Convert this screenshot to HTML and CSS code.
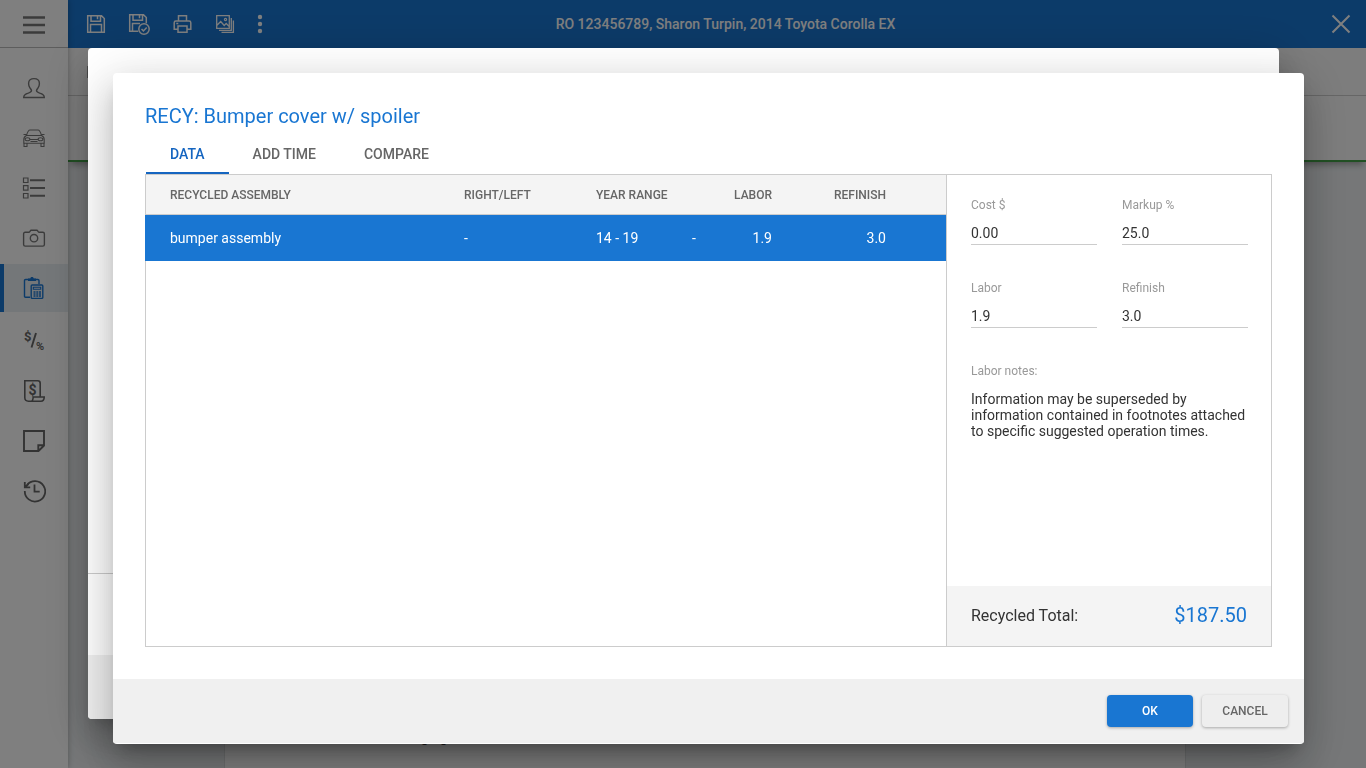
FILE: index.html
```html
<!DOCTYPE html>
<html lang="en">
<head>
    <meta charset="UTF-8">
    <meta name="viewport" content="width=device-width, initial-scale=1.0">
    <title>RO 123456789</title>
    <link rel="stylesheet" href="styles.css">
</head>
<body>
    <div class="app">
        <nav class="sidebar">
            <button class="menu-btn" aria-label="Menu">
                <svg class="icon" viewBox="0 0 24 24"><path d="M1 5.500h22M1 13h22M1 20.500h22" stroke-width="2.700"/></svg>
            </button>
            <div class="nav-group">
                <a class="nav-item" href="#" aria-label="Customer">
                    <svg class="icon" viewBox="0 0 24 24"><path d="M1.700 21.500c0-2.800 1.600-3.600 4.600-4.400 2-.6 3.200-1.300 3.200-2.500 0-1-1-1.800-1.700-3C6.900 10 6.600 8.600 6.600 7.400 6.600 4.300 8.800 2.600 12 2.600s5.400 1.700 5.400 4.800c0 1.200-.3 2.600-1.200 4.200-.7 1.200-1.700 2-1.700 3 0 1.200 1.200 1.900 3.200 2.500 3 .8 4.600 1.600 4.600 4.400z"/></svg>
                </a>
                <a class="nav-item" href="#" aria-label="Vehicle">
                    <svg class="icon thin" viewBox="0 0 24 24"><path d="M4.500 9.500C5.500 6 6.300 4 8 4h8c1.700 0 2.500 2 3.500 5.500M1.500 8.500h2.700M19.800 8.500h2.700M4.500 9.500h15c1.700.8 2.700 2 2.700 4v3.700H1.800v-3.700c0-2 1-3.200 2.700-4zM2 17.500v3h3v-3M19 17.500v3h3v-3M8 13.500h8M8.500 15.500h7"/><ellipse cx="5.500" cy="13.200" rx="2.400" ry="1.500"/><ellipse cx="18.500" cy="13.200" rx="2.400" ry="1.500"/></svg>
                </a>
                <a class="nav-item" href="#" aria-label="List">
                    <svg class="icon" viewBox="0 0 24 24"><path d="M1.500 2h4.500v4.500H1.500zM1.500 9.700h4.500v4.500H1.500zM1.500 17.500h4.500v4.500H1.500z" stroke-width="1.200"/><path d="M8 4.200h15M8 12h15M8 19.700h15" stroke-width="1.900"/></svg>
                </a>
                <a class="nav-item" href="#" aria-label="Photos">
                    <svg class="icon" viewBox="0 0 24 24"><path d="M3.200 6.300h3.600c1.200 0 1.200-2 2.400-2h5.600c1.200 0 1.200 2 2.400 2h3.600c1 0 1.600.6 1.600 1.600v10.600c0 1-.6 1.600-1.600 1.600H3.200c-1 0-1.600-.6-1.600-1.600V7.900c0-1 .6-1.600 1.600-1.600z"/><circle cx="12" cy="12.200" r="3.700"/></svg>
                </a>
                <a class="nav-item active" href="#" aria-label="Estimate">
                    <svg class="icon" viewBox="0 0 24 24"><path d="M8 21.300H3.600c-.7 0-1.100-.4-1.100-1.100V4.600c0-.7.400-1.100 1.100-1.100h12.300c.7 0 1.100.4 1.100 1.100V8"/><path class="fill" d="M6 5V2.500h2.300C8.600 1.300 9 .9 10 .9s1.400.4 1.700 1.600H14V5z"/><rect x="9.200" y="9" width="11.600" height="13.400" rx="1"/><path d="M11.300 11.300h7.400v2h-7.400z" stroke-width="1.100"/><path d="M11.500 16h2M14.300 16h2M17 16h2M11.500 18h2M14.300 18h2M17 18h2M11.500 20h2M14.300 20h2M17 20h2"/></svg>
                </a>
            </div>
            <div class="nav-group dark">
                <a class="nav-item" href="#" aria-label="Rates">
                    <svg class="icon" viewBox="0 0 24 24"><path d="M14 4 9.500 18.500" stroke-width="1.900"/><text x="2" y="12" font-size="13">$</text><text x="14" y="21" font-size="11">%</text></svg>
                </a>
                <a class="nav-item" href="#" aria-label="Invoice">
                    <svg class="icon" viewBox="0 0 24 24"><path d="M6.500 22.200c-2.500 0-3.700-1.200-3.700-3.700V1.800h13c1.500 0 2.400 1 2.400 2.500v13.200M6.500 22.200h2.700c1.500 0 1.800-1.500 2-4.200h11c0 3-1 4.200-3.300 4.200H8.500" stroke-width="1.600"/><text x="6.500" y="15.500" font-size="14">$</text></svg>
                </a>
                <a class="nav-item" href="#" aria-label="Notes">
                    <svg class="icon" viewBox="0 0 24 24"><path d="M2 2h20v14.500L16.500 22H2zM16.300 22v-5.700H22" stroke-width="1.900"/></svg>
                </a>
                <a class="nav-item" href="#" aria-label="History">
                    <svg class="icon" viewBox="0 0 24 24"><path d="M2.800 12A10.200 10.200 0 1 0 5 6" stroke-width="1.800"/><path d="M2.800 3v5.300h5.400M3 8.200 6.500 5M12.500 5.500v7.200h5.200" stroke-width="1.800"/></svg>
                </a>
            </div>
        </nav>
        <div class="main">
            <header class="topbar">
                <div class="actions">
                    <button aria-label="Save">
                        <svg class="icon" viewBox="0 0 24 24"><path d="M3.700 3.700h13.800l2.800 2.800v13.800H3.700zM7 3.700v5.600h9.500V3.700M13.500 4.500v2.800M6.500 20.300v-7.800h11v7.800"/></svg>
                    </button>
                    <button aria-label="Save and check">
                        <svg class="icon" viewBox="0 0 24 24"><path d="M11.300 19.300H2.700V2.700h13.800l2.800 2.800v5.800M6 2.700v5.600h9.500V2.700M12.500 3.500v2.800M5.500 19.300v-7.800H13"/><circle cx="17" cy="17" r="5.200"/><path d="m14.500 17 1.900 1.900 3.300-3.500"/></svg>
                    </button>
                    <button aria-label="Print">
                        <svg class="icon" viewBox="0 0 24 24"><path d="M8.500 9V3.700h8V9M8 17.300H4.200v-6.600c0-1 .7-1.700 1.700-1.700h13.200c1 0 1.700.7 1.700 1.700v6.600H17M8 14h9v6.300H8zM6.300 11.500h2"/></svg>
                    </button>
                    <button aria-label="Images">
                        <svg class="icon" viewBox="0 0 24 24"><path d="M3.700 3.700h12.600v12.600H3.700zM6 18.300h12.300V6M8.500 20.400h11.900V8.500M3.700 13.500l4-4 3.500 4 2-2 3 3" stroke-width="1.300"/><circle cx="12.500" cy="7.500" r="1.100" stroke-width="1.200"/></svg>
                    </button>
                    <button class="more" aria-label="More">
                        <svg viewBox="0 0 8 24"><circle cx="4" cy="5" r="2.200"/><circle cx="4" cy="12" r="2.200"/><circle cx="4" cy="19" r="2.200"/></svg>
                    </button>
                </div>
                <div class="ro-title">RO 123456789, Sharon Turpin, 2014 Toyota Corolla EX</div>
                <button class="close-btn" aria-label="Close">
                    <svg class="icon" viewBox="0 0 24 24"><path d="m3.500 3.500 17 17m0-17-17 17" stroke-width="2"/></svg>
                </button>
            </header>
            <div class="subbar"><span class="marker"></span></div>
            <div class="summary"></div>
            <div class="content">
                <div class="paper">Imaging</div>
            </div>
        </div>
    </div>

    <div class="overlay"></div>

    <div class="modal modal-back">
        <div class="modal-body"></div>
        <div class="modal-total"></div>
        <div class="modal-footer"></div>
    </div>

    <div class="modal modal-front" role="dialog" aria-labelledby="modal-title">
        <div class="modal-body">
            <h1 class="modal-title" id="modal-title">RECY: Bumper cover w/ spoiler</h1>
            <div class="tabs" role="tablist">
                <button class="tab active" role="tab" aria-selected="true">DATA</button>
                <button class="tab" role="tab">ADD TIME</button>
                <button class="tab" role="tab">COMPARE</button>
            </div>
            <div class="panel">
                <div class="table-wrap">
                    <table class="parts">
                        <thead>
                            <tr>
                                <th class="col-name">RECYCLED ASSEMBLY</th>
                                <th class="col-side">RIGHT/LEFT</th>
                                <th class="col-year">YEAR RANGE</th>
                                <th class="col-note"></th>
                                <th class="col-labor">LABOR</th>
                                <th class="col-refinish">REFINISH</th>
                            </tr>
                        </thead>
                        <tbody>
                            <tr class="selected">
                                <td class="col-name">bumper assembly</td>
                                <td>-</td>
                                <td>14 - 19</td>
                                <td>-</td>
                                <td class="col-labor">1.9</td>
                                <td class="col-refinish">3.0</td>
                            </tr>
                        </tbody>
                    </table>
                </div>
                <div class="details">
                    <div class="fields">
                        <div class="field">
                            <label for="cost">Cost $</label>
                            <input type="text" id="cost" value="0.00">
                        </div>
                        <div class="field">
                            <label for="markup">Markup %</label>
                            <input type="text" id="markup" value="25.0">
                        </div>
                        <div class="field">
                            <label for="labor">Labor</label>
                            <input type="text" id="labor" value="1.9">
                        </div>
                        <div class="field">
                            <label for="refinish">Refinish</label>
                            <input type="text" id="refinish" value="3.0">
                        </div>
                        <div class="notes">
                            <h2>Labor notes:</h2>
                            <p>Information may be superseded by information contained in footnotes attached to specific suggested operation times.</p>
                        </div>
                    </div>
                    <div class="total">
                        <span>Recycled Total:</span>
                        <span class="amount">$187.50</span>
                    </div>
                </div>
            </div>
        </div>
        <div class="modal-footer">
            <button class="btn btn-primary">OK</button>
            <button class="btn">CANCEL</button>
        </div>
    </div>
</body>
</html>
```
FILE: styles.css
```css
* {
    box-sizing: border-box;
}
body {
    margin: 0;
    height: 100vh;
    overflow: hidden;
    font-family: Roboto, sans-serif;
    font-size: 14px;
    color: #333;
}
button {
    border: none;
    padding: 0;
    background: none;
    font-family: inherit;
    cursor: pointer;
}

/* App behind the dialogs */
.app {
    display: flex;
    height: 100%;
}
.icon {
    display: block;
    width: 24px;
    height: 24px;
    fill: none;
    stroke: currentColor;
    stroke-width: 1.4;
}
.icon.thin {
    stroke-width: 1.1;
}
.icon text,
.icon .fill {
    fill: currentColor;
    stroke: none;
}
.icon text {
    font-weight: 700;
}
.sidebar {
    width: 68px;
    background: #fff;
    color: #777;
    box-shadow: 0 0 6px rgba(0, 0, 0, 0.3);
    z-index: 2;
}
.menu-btn {
    display: flex;
    justify-content: center;
    align-items: center;
    width: 100%;
    height: 48px;
    border-bottom: 1px solid #bbb;
    margin-bottom: 16px;
    color: #777;
}
.nav-group {
    display: flex;
    flex-direction: column;
    gap: 2px;
    margin-bottom: 5px;
}
.nav-group.dark {
    color: #666;
}
.nav-item {
    display: flex;
    justify-content: center;
    align-items: center;
    height: 48px;
    color: inherit;
}
.nav-item.active {
    background: #e8eef3;
    color: #1976d2;
    box-shadow: inset 4px 0 #1976d2;
}
.main {
    flex: 1;
    display: flex;
    flex-direction: column;
}
.topbar {
    display: grid;
    grid-template-columns: 1fr auto 1fr;
    align-items: center;
    height: 48px;
    padding: 0 13px 0 16px;
    background: #1976d2;
    color: #fff;
}
.topbar .icon {
    stroke-width: 1.5;
}
.topbar button {
    color: inherit;
}
.actions {
    display: flex;
    gap: 19px;
}
.more svg {
    display: block;
    width: 8px;
    height: 24px;
    fill: currentColor;
}
.ro-title {
    padding-left: 14px;
    font-weight: 500;
}
.close-btn {
    justify-self: end;
}
.subbar {
    display: flex;
    align-items: center;
    height: 48px;
    padding-left: 19px;
    background: #fafafa;
    border-bottom: 1px solid #ccc;
}
.marker {
    width: 8px;
    height: 12px;
    background: #999;
}
.summary {
    height: 66px;
    background: #fafafa;
    border-bottom: 2px solid #43a047;
    box-shadow: 0 6px 6px -3px rgba(0, 0, 0, 0.3);
    z-index: 1;
}
.content {
    flex: 1;
    display: flex;
    padding: 0 181px 0 157px;
    background: #eceff1;
}
.paper {
    flex: 1;
    display: flex;
    align-items: flex-end;
    padding: 0 172px 23px;
    background: #fff;
    box-shadow: 0 0 1px rgba(0, 0, 0, 0.4);
}
.overlay {
    position: fixed;
    inset: 0;
    z-index: 5;
    background: rgba(0, 0, 0, 0.5);
}

/* Dialogs */
.modal {
    position: fixed;
    z-index: 10;
    display: flex;
    flex-direction: column;
    background: #fff;
    border-radius: 4px;
    overflow: hidden;
    box-shadow:
        0 11px 15px -7px rgba(0, 0, 0, 0.2),
        0 24px 38px 3px rgba(0, 0, 0, 0.14),
        0 9px 46px 8px rgba(0, 0, 0, 0.12);
}
.modal-back {
    inset: 48px 87px 49px 88px;
}
.modal-front {
    inset: 73px 62px 24px 113px;
    padding-bottom: 1px;
}
.modal-body {
    flex: 1;
    display: flex;
    flex-direction: column;
    padding: 32px;
}
.modal-total {
    height: 82px;
    border-top: 1px solid #ccc;
}
.modal-footer {
    display: flex;
    justify-content: flex-end;
    gap: 9px;
    height: 64px;
    padding: 16px;
    background: #f0f0f0;
}
.modal-title {
    margin: 0 0 7px;
    font-size: 20px;
    font-weight: 400;
    line-height: 22px;
    color: #1976d2;
}
.tabs {
    display: flex;
    padding-left: 1px;
}
.tab {
    height: 40px;
    padding: 2px 24px 0;
    border-bottom: 2px solid transparent;
    font-size: 14px;
    font-weight: 500;
    color: #666;
}
.tab.active {
    border-bottom-color: #1565c0;
    color: #1565c0;
}
.panel {
    flex: 1;
    display: flex;
    border: 1px solid #ccc;
}
.table-wrap {
    flex: 1;
}
.parts {
    width: 100%;
    table-layout: fixed;
    border-collapse: separate;
    border-spacing: 0;
    text-align: left;
}
.parts th {
    height: 40px;
    padding: 0;
    background: #f4f4f4;
    border-bottom: 1px solid #ccc;
    font-size: 12px;
    font-weight: 500;
    color: #666;
}
.parts td {
    height: 46px;
    padding: 0;
    color: #fff;
}
.selected {
    background: #1976d2;
    box-shadow: -1px 0 #1976d2;
}
.parts .col-name {
    width: 318px;
    padding-left: 24px;
}
.col-side {
    width: 132px;
}
.col-year {
    width: 96px;
}
.col-note {
    width: 28px;
}
.parts .col-labor {
    width: 52px;
    text-align: right;
}
.parts .col-refinish {
    width: 174px;
    padding-right: 60px;
    text-align: right;
}
.details {
    display: flex;
    flex-direction: column;
    justify-content: space-between;
    width: 325px;
    border-left: 1px solid #ccc;
}
.fields {
    display: grid;
    grid-template-columns: 1fr 1fr;
    gap: 35px 25px;
    padding: 22px 23px 22px 24px;
}
.field {
    display: flex;
    flex-direction: column;
    gap: 8px;
}
.field label,
.notes h2 {
    margin: 0;
    font-size: 12px;
    font-weight: 400;
    line-height: 16px;
    color: #999;
}
.field input {
    width: 100%;
    height: 24px;
    padding: 0;
    border: none;
    border-bottom: 1px solid #ccc;
    background: none;
    font-family: inherit;
    font-size: 14px;
    color: #333;
    outline: none;
}
.notes {
    grid-column: 1 / -1;
}
.notes p {
    margin: 12px 0 0;
    line-height: 16px;
}
.total {
    display: flex;
    justify-content: space-between;
    align-items: center;
    height: 60px;
    padding: 0 24px 2px;
    background: #f4f4f4;
    font-size: 16px;
}
.amount {
    font-size: 20px;
    color: #1976d2;
}
.btn {
    width: 86px;
    height: 32px;
    border-radius: 4px;
    background: #eee;
    box-shadow: 0 1px 3px rgba(0, 0, 0, 0.3);
    font-size: 12px;
    font-weight: 500;
    color: #666;
}
.btn-primary {
    background: #1976d2;
    color: #fff;
}
```
